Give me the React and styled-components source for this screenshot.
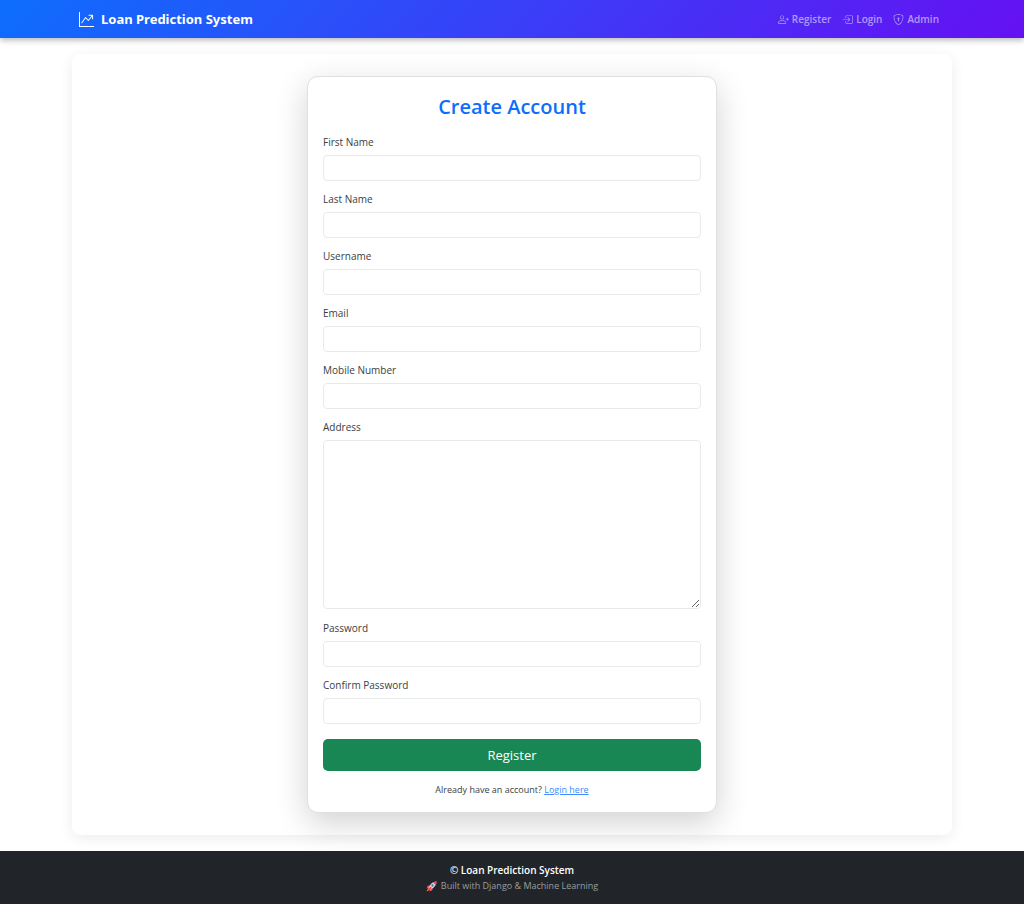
import React, { useState } from 'react';
import styled, { createGlobalStyle, ThemeProvider } from 'styled-components';
import { BsGraphUpArrow, BsPersonPlus, BsBoxArrowInRight, BsShieldLock } from 'react-icons/bs';

const theme = {
  colors: {
    primary: '#0d6efd',
    link: '#3d8bfd',
    accent: '#6610f2',
    success: '#198754',
    dark: '#212529',
    text: '#3a3e42',
    muted: '#9a9da0',
    border: '#e9eaec',
  },
  contentWidth: '880px',
};

const GlobalStyle = createGlobalStyle`
  *, *::before, *::after {
    box-sizing: border-box;
  }
  body {
    margin: 0;
    background: #fff;
    color: ${theme.colors.text};
    font-family: 'Segoe UI', 'Open Sans', 'Noto Sans', sans-serif;
    font-size: 10px;
    line-height: 16px;
  }
`;

const Navbar = styled.nav`
  position: relative;
  padding: 0 16px;
  background: linear-gradient(135deg, ${({ theme }) => theme.colors.primary}, ${({ theme }) => theme.colors.accent});
  box-shadow: 0 2px 6px rgba(0, 0, 0, 0.3);
`;

const NavInner = styled.div`
  display: flex;
  align-items: center;
  justify-content: space-between;
  max-width: ${({ theme }) => theme.contentWidth};
  min-height: 38px;
  margin: 0 auto;
  padding: 0 7px;
`;

const Brand = styled.a`
  display: flex;
  align-items: center;
  gap: 7px;
  color: #fff;
  font-family: 'Segoe UI', 'Noto Sans', 'Open Sans', sans-serif;
  font-size: 13px;
  font-weight: 700;
  text-decoration: none;
`;

const NavLinks = styled.div`
  display: flex;
  gap: 11px;
  padding-right: 6px;
`;

const NavLink = styled.a`
  display: flex;
  align-items: center;
  gap: 3px;
  color: rgba(255, 255, 255, 0.55);
  font-size: 10px;
  font-weight: 600;
  text-decoration: none;
  &:hover {
    color: #fff;
  }
`;

const Page = styled.main`
  padding: 16px;
`;

const Panel = styled.div`
  max-width: ${({ theme }) => theme.contentWidth};
  margin: 0 auto;
  padding: 22px;
  background: #fff;
  border-radius: 8px;
  box-shadow: 0 3px 14px rgba(0, 0, 0, 0.08);
`;

const Card = styled.section`
  max-width: 410px;
  margin: 0 auto;
  padding: 15px;
  background: #fff;
  border: 1px solid #e0e0e0;
  border-radius: 11px;
  box-shadow: 0 10px 32px rgba(0, 0, 0, 0.18);
`;

const Title = styled.h1`
  margin: 0 0 12px;
  color: ${({ theme }) => theme.colors.primary};
  font-size: 20px;
  font-weight: 600;
  line-height: 30px;
  text-align: center;
`;

const Form = styled.form`
  display: flex;
  flex-direction: column;
  gap: 10px;
`;

const Field = styled.div`
  display: flex;
  flex-direction: column;
  gap: 5px;
`;

const Label = styled.label`
  font-size: 10px;
`;

const Input = styled.input`
  width: 100%;
  height: 26px;
  padding: 4px 8px;
  border: 1px solid ${({ theme }) => theme.colors.border};
  border-radius: 4px;
  background: #fff;
  color: inherit;
  font: inherit;
  &:focus {
    border-color: #86b7fe;
    outline: none;
  }
`;

const TextArea = styled(Input)`
  height: 169px;
  margin-bottom: 1px;
  resize: vertical;
`;

const SubmitButton = styled.button`
  height: 32px;
  margin-top: 5px;
  border: none;
  border-radius: 5px;
  background: ${({ theme }) => theme.colors.success};
  color: #fff;
  font-family: inherit;
  font-size: 13px;
  cursor: pointer;
`;

const LoginHint = styled.p`
  margin: 11px 0 0;
  font-size: 9px;
  line-height: 15px;
  text-align: center;
`;

const LoginLink = styled.a`
  color: ${({ theme }) => theme.colors.link};
`;

const Footer = styled.footer`
  padding: 11px 16px 10px;
  background: ${({ theme }) => theme.colors.dark};
  color: #fff;
  text-align: center;
`;

const FooterTitle = styled.p`
  margin: 0;
  font-size: 10px;
  font-weight: 600;
`;

const FooterNote = styled.p`
  display: flex;
  align-items: center;
  justify-content: center;
  gap: 4px;
  margin: 0;
  color: ${({ theme }) => theme.colors.muted};
  font-size: 9px;
`;

const fields = [
  { name: 'first_name', label: 'First Name', type: 'text' },
  { name: 'last_name', label: 'Last Name', type: 'text' },
  { name: 'username', label: 'Username', type: 'text' },
  { name: 'email', label: 'Email', type: 'email' },
  { name: 'mobile', label: 'Mobile Number', type: 'tel' },
  { name: 'address', label: 'Address', multiline: true },
  { name: 'password', label: 'Password', type: 'password' },
  { name: 'confirm_password', label: 'Confirm Password', type: 'password' },
];

const RocketIcon = () => (
  <svg width="11" height="11" viewBox="0 0 22 22" aria-hidden="true">
    <path d="M7 8 3 10 1 15 7 14zM14 15 12 19 7 21 8 15z" fill="#f8415f" />
    <path d="M5 14 1 21 8 17z" fill="#ffb02e" />
    <path d="M21 1C14 1 9 5 5 13L9 17C17 13 21 8 21 1z" fill="#d3dbe5" />
    <path d="M21 1C18 1 16 2 14 3L19 8C20 6 21 4 21 1z" fill="#f8415f" />
    <circle cx="13" cy="9" r="2.3" fill="#3f6fa5" />
    <path d="M9 11 12 14 6 19 4 17z" fill="#f8415f" />
  </svg>
);

const App = () => {
  const [values, setValues] = useState({});

  const handleChange = (e) => {
    setValues({ ...values, [e.target.name]: e.target.value });
  };

  const handleSubmit = (e) => {
    e.preventDefault();
  };

  return (
    <ThemeProvider theme={theme}>
      <GlobalStyle />
      <Navbar>
        <NavInner>
          <Brand href="#home">
            <BsGraphUpArrow size={15} />
            Loan Prediction System
          </Brand>
          <NavLinks>
            <NavLink href="#register"><BsPersonPlus size={11} />Register</NavLink>
            <NavLink href="#login"><BsBoxArrowInRight size={11} />Login</NavLink>
            <NavLink href="#admin"><BsShieldLock size={11} />Admin</NavLink>
          </NavLinks>
        </NavInner>
      </Navbar>

      <Page>
        <Panel>
          <Card>
            <Title>Create Account</Title>
            <Form onSubmit={handleSubmit}>
              {fields.map(({ name, label, type, multiline }) => (
                <Field key={name}>
                  <Label htmlFor={name}>{label}</Label>
                  {multiline ? (
                    <TextArea as="textarea" id={name} name={name} value={values[name] || ''} onChange={handleChange} />
                  ) : (
                    <Input id={name} name={name} type={type} value={values[name] || ''} onChange={handleChange} />
                  )}
                </Field>
              ))}
              <SubmitButton type="submit">Register</SubmitButton>
            </Form>
            <LoginHint>
              Already have an account? <LoginLink href="#login">Login here</LoginLink>
            </LoginHint>
          </Card>
        </Panel>
      </Page>

      <Footer>
        <FooterTitle>© Loan Prediction System</FooterTitle>
        <FooterNote><RocketIcon /> Built with Django &amp; Machine Learning</FooterNote>
      </Footer>
    </ThemeProvider>
  );
};

export default App;
